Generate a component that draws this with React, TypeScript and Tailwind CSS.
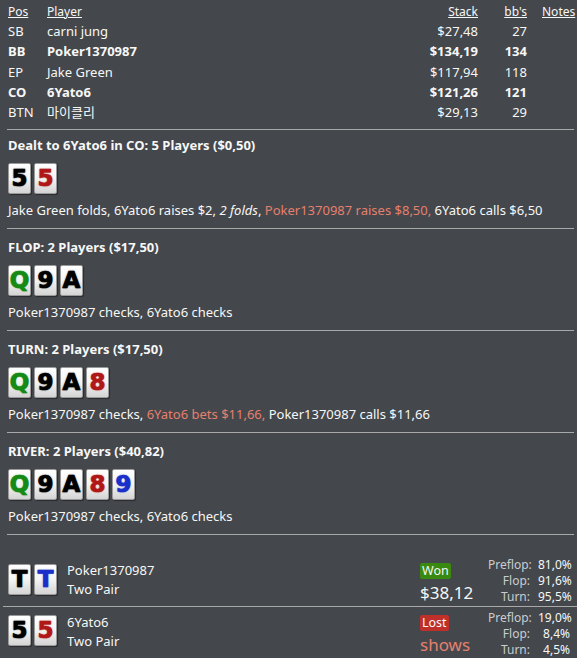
import React from "react";

type C = { r: string; c: "k" | "r" | "g" | "b" };
const colorMap: Record<string, string> = {
  k: "text-[#000000]",
  r: "text-[#b01818]",
  g: "text-[#158a15]",
  b: "text-[#1a30c8]",
};

function Card({ r, c }: C) {
  return (
    <div className="w-[23px] h-[31px] rounded-[2px] bg-gradient-to-b from-[#ffffff] via-[#f4f4f4] to-[#d4d4d4] border border-[#9a9a9a] flex items-center justify-center shadow-[1px_1px_1px_rgba(0,0,0,0.4)]">
      <span
        className={`${colorMap[c]} text-[23px] leading-none font-black [-webkit-text-stroke:0.7px_currentColor] [text-shadow:0_0_1.5px_currentColor]`}
        style={{ fontFamily: '"DejaVu Sans", "Liberation Sans", sans-serif' }}
      >
        {r}
      </span>
    </div>
  );
}

function Cards({ cards }: { cards: C[] }) {
  return (
    <div className="flex gap-[3px]">
      {cards.map((c, i) => (
        <Card key={i} {...c} />
      ))}
    </div>
  );
}

const Red = ({ children }: { children: React.ReactNode }) => <span className="text-[#e5806f]">{children}</span>;

function Street({
  title,
  cards,
  first,
  children,
}: {
  title: string;
  cards: C[];
  first?: boolean;
  children: React.ReactNode;
}) {
  return (
    <div className={`ml-[7px] mr-[3px] border-b border-[#a9a9a9] pb-[8px] ${first ? "pt-[5px]" : "pt-[8px]"}`}>
      <div className="px-[1px] font-bold leading-[20px]">{title}</div>
      <div className="px-[1px] mt-[8px]">
        <Cards cards={cards} />
      </div>
      <div className="px-[1px] mt-[6px] leading-[20px]">{children}</div>
    </div>
  );
}

const players = [
  { pos: "SB", name: "carni jung", stack: "$27,48", bb: "27", bold: false },
  { pos: "BB", name: "Poker1370987", stack: "$134,19", bb: "134", bold: true },
  { pos: "EP", name: "Jake Green", stack: "$117,94", bb: "118", bold: false },
  { pos: "CO", name: "6Yato6", stack: "$121,26", bb: "121", bold: true },
  { pos: "BTN", name: "마이클리", stack: "$29,13", bb: "29", bold: false },
];

function Stats({ rows }: { rows: [string, string][] }) {
  return (
    <div className="grid grid-cols-[42px_32px] gap-x-[8px] text-[12px] leading-[16px]">
      {rows.map(([l, v]) => (
        <React.Fragment key={l}>
          <div className="text-right text-[#c9cdd2] whitespace-nowrap">{l}</div>
          <div className="text-right whitespace-nowrap">{v}</div>
        </React.Fragment>
      ))}
    </div>
  );
}

export default function App() {
  return (
    <div
      className="w-[577px] h-[658px] bg-[#44474b] text-[#f7f7f7] text-[13px] overflow-hidden"
      style={{ fontFamily: '"Noto Sans", "Noto Sans CJK KR", sans-serif' }}
    >
      <div className="ml-[7px] mr-[3px] border-b border-[#a9a9a9] pt-[3px] pb-[7px]">
        <div className="grid grid-cols-[39px_1fr_auto_49px_47px] pl-[1px] leading-[20.25px]">
          <div className="underline text-[12px] leading-[18px]">Pos</div>
          <div className="underline text-[12px] leading-[18px]">Player</div>
          <div className="underline text-[12px] leading-[18px] text-right">Stack</div>
          <div className="underline text-[12px] leading-[18px] text-right">bb's</div>
          <div className="underline text-[12px] leading-[18px] pl-[15px]">Notes</div>
          {players.map((p) => (
            <React.Fragment key={p.pos}>
              <div className={p.bold ? "font-bold" : ""}>{p.pos}</div>
              <div className={p.bold ? "font-bold" : ""}>{p.name}</div>
              <div className={`text-right ${p.bold ? "font-bold" : ""}`}>{p.stack}</div>
              <div className={`text-right ${p.bold ? "font-bold" : ""}`}>{p.bb}</div>
              <div />
            </React.Fragment>
          ))}
        </div>
      </div>

      <Street first title="Dealt to 6Yato6 in CO: 5 Players ($0,50)" cards={[{ r: "5", c: "k" }, { r: "5", c: "r" }]}>
        Jake Green folds, 6Yato6 raises $2, <i>2 folds</i>, <Red>Poker1370987 raises $8,50,</Red> 6Yato6 calls $6,50
      </Street>
      <Street title="FLOP: 2 Players ($17,50)" cards={[{ r: "Q", c: "g" }, { r: "9", c: "k" }, { r: "A", c: "k" }]}>
        Poker1370987 checks, 6Yato6 checks
      </Street>
      <Street
        title="TURN: 2 Players ($17,50)"
        cards={[{ r: "Q", c: "g" }, { r: "9", c: "k" }, { r: "A", c: "k" }, { r: "8", c: "r" }]}
      >
        Poker1370987 checks, <Red>6Yato6 bets $11,66,</Red> Poker1370987 calls $11,66
      </Street>
      <Street
        title="RIVER: 2 Players ($40,82)"
        cards={[{ r: "Q", c: "g" }, { r: "9", c: "k" }, { r: "A", c: "k" }, { r: "8", c: "r" }, { r: "9", c: "b" }]}
      >
        Poker1370987 checks, 6Yato6 checks
      </Street>

      <div>
        <div className="ml-[3px] border-b border-[#a9a9a9] flex items-start pb-[1px]">
          <div className="pl-[5px] pt-[29px]">
            <Cards cards={[{ r: "T", c: "k" }, { r: "T", c: "b" }]} />
          </div>
          <div className="ml-[10px] leading-[19px] pt-[26px]">
            <div>Poker1370987</div>
            <div>Two Pair</div>
          </div>
          <div className="ml-auto w-[68px] pt-[26px]">
            <span className="inline-block bg-[#3a8a12] rounded-[2px] px-[2px] leading-[16px] text-[12.5px]">Won</span>
            <div className="text-[17px] leading-[22px] mt-[1px]">$38,12</div>
          </div>
          <div className="pr-[7px] pt-[22px]">
            <Stats rows={[["Preflop:", "81,0%"], ["Flop:", "91,6%"], ["Turn:", "95,5%"]]} />
          </div>
        </div>
        <div className="ml-[3px] flex items-start">
          <div className="pl-[5px] pt-[8px]">
            <Cards cards={[{ r: "5", c: "k" }, { r: "5", c: "r" }]} />
          </div>
          <div className="ml-[10px] leading-[19px] pt-[6px]">
            <div>6Yato6</div>
            <div>Two Pair</div>
          </div>
          <div className="ml-auto w-[68px] pt-[6px]">
            <span className="inline-block bg-[#c0302a] rounded-[2px] px-[2px] leading-[16px] text-[12.5px]">Lost</span>
            <div className="text-[17px] leading-[22px] mt-[1px] text-[#e5806f]">shows</div>
          </div>
          <div className="pr-[7px] pt-[3px]">
            <Stats rows={[["Preflop:", "19,0%"], ["Flop:", "8,4%"], ["Turn:", "4,5%"]]} />
          </div>
        </div>
      </div>
    </div>
  );
}
